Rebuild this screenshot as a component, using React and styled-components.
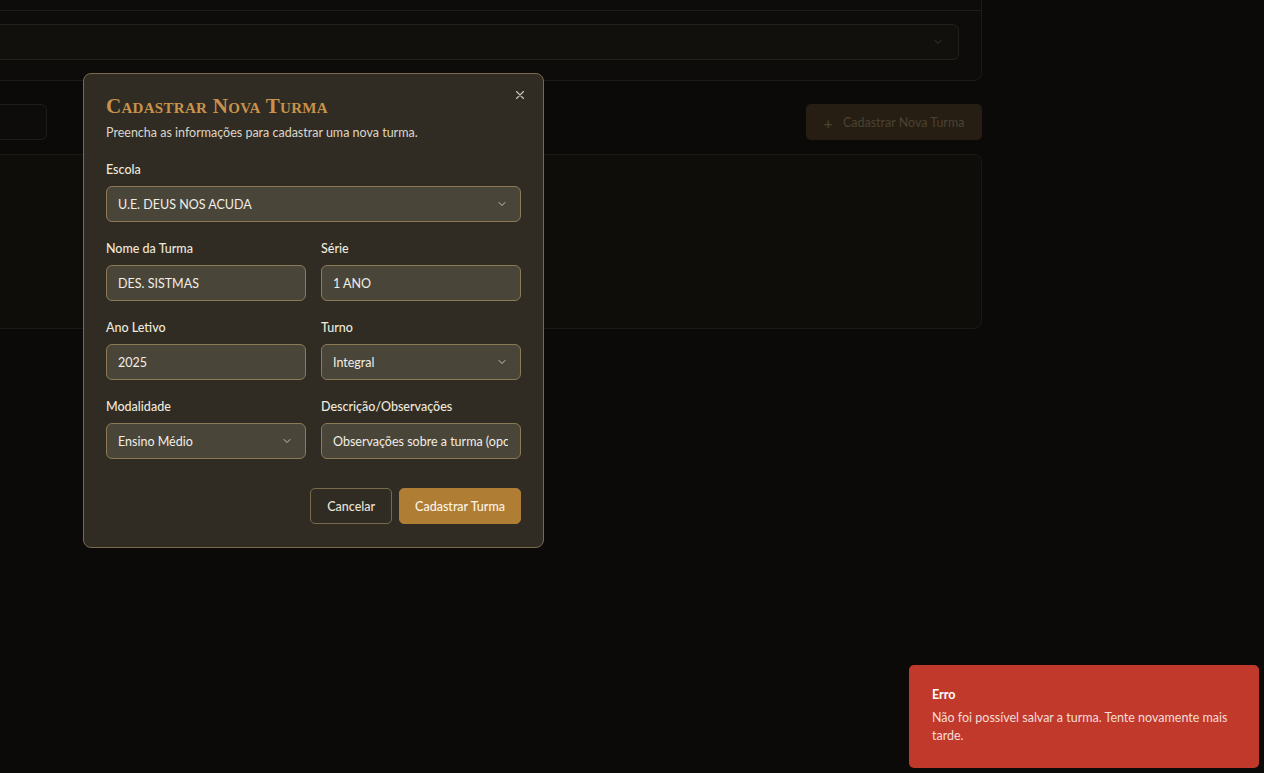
import React from 'react';
import styled, { createGlobalStyle } from 'styled-components';

const GlobalStyle = createGlobalStyle`
  html, body {
    margin: 0;
    padding: 0;
    background: #0b0a08;
    font-family: Lato, "Noto Sans", sans-serif;
    height: 100%;
    overflow: hidden;
  }
  * { box-sizing: border-box; }
`;

const Page = styled.div`
  position: relative;
  width: 1264px;
  height: 773px;
  background: #0b0a08;
`;

const Backdrop = styled.div`
  width: 982px;
  display: flex;
  flex-direction: column;
`;

const FilterCard = styled.div`
  margin-top: -20px;
  height: 101px;
  border: 1px solid #1d1b16;
  border-left: none;
  border-radius: 0 0 8px 0;
  background: #0d0c0a;
  display: flex;
  flex-direction: column;
  padding-right: 22px;
`;

const CardDivider = styled.div`
  margin-top: 29px;
  border-top: 1px solid #1d1b16;
  margin-right: -22px;
`;

const GhostSelect = styled.div`
  margin-top: 13px;
  height: 36px;
  border: 1px solid #22201a;
  border-left: none;
  border-radius: 0 6px 6px 0;
  background: #11100d;
  display: flex;
  align-items: center;
  justify-content: flex-end;
  padding-right: 14px;
  color: #3b382f;
`;

const Toolbar = styled.div`
  margin-top: 23px;
  display: flex;
  justify-content: space-between;
  align-items: center;
  height: 36px;
`;

const GhostSearch = styled.div`
  width: 47px;
  height: 36px;
  border: 1px solid #1f1d18;
  border-left: none;
  border-radius: 0 6px 6px 0;
  background: #0d0c0a;
`;

const GhostButton = styled.div`
  width: 176px;
  height: 36px;
  border-radius: 5px;
  background: #261e12;
  color: #4a4234;
  font-size: 12.5px;
  display: flex;
  align-items: center;
  justify-content: center;
  gap: 10px;
`;

const ListCard = styled.div`
  margin-top: 14px;
  height: 175px;
  border: 1px solid #1b1914;
  border-left: none;
  border-radius: 0 8px 8px 0;
  background: #0e0d0a;
`;

const Modal = styled.div`
  position: absolute;
  left: 83px;
  top: 73px;
  width: 461px;
  height: 475px;
  background: #302c24;
  border: 1px solid #7a6a4c;
  border-radius: 8px;
  padding: 19px 22px 22px 22px;
  color: #efe9dc;
`;

const CloseButton = styled.button`
  position: absolute;
  top: 13px;
  right: 15px;
  width: 16px;
  height: 16px;
  padding: 0;
  border: none;
  background: none;
  color: #c9c3b6;
  display: flex;
  align-items: center;
  justify-content: center;
`;

const Title = styled.h2`
  margin: 0;
  font-family: "Liberation Serif", "DejaVu Serif", serif;
  font-variant: small-caps;
  font-weight: 700;
  font-size: 21px;
  letter-spacing: 0.3px;
  color: #c9924a;
  line-height: 26px;
`;

const Subtitle = styled.p`
  margin: 6px 0 0 0;
  font-size: 12.5px;
  color: #ddd6c8;
  line-height: 16px;
`;

const Form = styled.div`
  margin-top: 21px;
  display: grid;
  grid-template-columns: minmax(0, 1fr) minmax(0, 1fr);
  column-gap: 15px;
  row-gap: 19px;
`;

const Field = styled.div`
  display: flex;
  flex-direction: column;
  gap: 8px;
  grid-column: ${p => (p.$full ? '1 / -1' : 'auto')};
`;

const Label = styled.label`
  font-size: 12.5px;
  font-weight: 500;
  color: #efe9dc;
  line-height: 16px;
`;

const Control = styled.div`
  height: 36px;
  border: 1.5px solid #8c7a57;
  border-radius: 6px;
  background: #4a4539;
  padding: 0 12px 0 11px;
  display: flex;
  align-items: center;
  justify-content: space-between;
  font-size: 12.5px;
  color: #f2eee6;
  white-space: nowrap;
  overflow: hidden;
`;

const ControlText = styled.span`
  overflow: hidden;
  white-space: nowrap;
`;

const Actions = styled.div`
  margin-top: 29px;
  display: flex;
  justify-content: flex-end;
  gap: 7px;
`;

const Button = styled.button`
  height: 36px;
  padding: 0 ${p => (p.$primary ? '15px' : '16px')};
  border-radius: 5px;
  font-family: Lato, sans-serif;
  font-size: 12.5px;
  font-weight: 500;
  cursor: pointer;
  border: 1px solid ${p => (p.$primary ? '#b07d34' : '#7a6a4c')};
  background: ${p => (p.$primary ? '#b07d34' : '#302c24')};
  color: ${p => (p.$primary ? '#fbf4e6' : '#e9e3d6')};
`;

const Toast = styled.div`
  position: absolute;
  left: 909px;
  top: 665px;
  width: 350px;
  height: 103px;
  background: #c0392b;
  border-radius: 5px;
  padding: 22px 22px 0 23px;
  color: #fbeeea;
`;

const ToastTitle = styled.div`
  font-size: 12.5px;
  font-weight: 700;
  line-height: 16px;
  color: #ffffff;
`;

const ToastText = styled.div`
  margin-top: 6px;
  font-size: 12.5px;
  line-height: 18px;
  color: #f6dcd7;
`;

const Chevron = ({ color = '#c9c3b6' }) => (
  <svg width="12" height="12" viewBox="0 0 24 24" fill="none" stroke={color} strokeWidth="2" strokeLinecap="round" strokeLinejoin="round">
    <path d="m6 9 6 6 6-6" />
  </svg>
);

const SelectControl = ({ value }) => (
  <Control>
    <ControlText>{value}</ControlText>
    <Chevron />
  </Control>
);

export default function App() {
  return (
    <Page>
      <GlobalStyle />
      <Backdrop>
        <FilterCard>
          <CardDivider />
          <GhostSelect>
            <Chevron color="#3b382f" />
          </GhostSelect>
        </FilterCard>
        <Toolbar>
          <GhostSearch />
          <GhostButton>
            <span style={{ fontSize: 16 }}>+</span>
            Cadastrar Nova Turma
          </GhostButton>
        </Toolbar>
        <ListCard />
      </Backdrop>

      <Modal>
        <CloseButton aria-label="Fechar">
          <svg width="14" height="14" viewBox="0 0 24 24" fill="none" stroke="currentColor" strokeWidth="2" strokeLinecap="round">
            <path d="M18 6 6 18M6 6l12 12" />
          </svg>
        </CloseButton>
        <Title>Cadastrar Nova Turma</Title>
        <Subtitle>Preencha as informações para cadastrar uma nova turma.</Subtitle>
        <Form>
          <Field $full>
            <Label>Escola</Label>
            <SelectControl value="U.E. DEUS NOS ACUDA" />
          </Field>
          <Field>
            <Label>Nome da Turma</Label>
            <Control><ControlText>DES. SISTMAS</ControlText></Control>
          </Field>
          <Field>
            <Label>Série</Label>
            <Control><ControlText>1 ANO</ControlText></Control>
          </Field>
          <Field>
            <Label>Ano Letivo</Label>
            <Control><ControlText>2025</ControlText></Control>
          </Field>
          <Field>
            <Label>Turno</Label>
            <SelectControl value="Integral" />
          </Field>
          <Field>
            <Label>Modalidade</Label>
            <SelectControl value="Ensino Médio" />
          </Field>
          <Field>
            <Label>Descrição/Observações</Label>
            <Control><ControlText>Observações sobre a turma (opcional)</ControlText></Control>
          </Field>
        </Form>
        <Actions>
          <Button>Cancelar</Button>
          <Button $primary>Cadastrar Turma</Button>
        </Actions>
      </Modal>

      <Toast>
        <ToastTitle>Erro</ToastTitle>
        <ToastText>Não foi possível salvar a turma. Tente novamente mais tarde.</ToastText>
      </Toast>
    </Page>
  );
}
